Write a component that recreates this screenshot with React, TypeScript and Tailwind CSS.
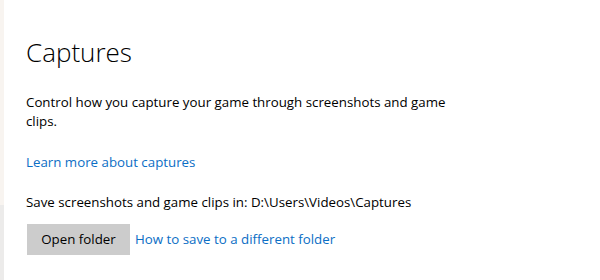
import React from 'react';

const font = { fontFamily: '"Open Sans", "Noto Sans", sans-serif' };

export default function App() {
  return (
    <div className="flex h-[280px] w-[600px] overflow-hidden bg-white" style={font}>
      {/* faint edge of the nav pane */}
      <div className="flex w-[4px] flex-col">
        <div className="h-[205px] bg-[#f8f4f0]" />
        <div className="flex-1 bg-[#ecebea]" />
      </div>
      <div className="flex flex-1 flex-col pl-[22px] pt-[34px] text-[#000]">
        <h1 className="text-[26px] font-light leading-[36px]">Captures</h1>
        <p className="mt-[23px] w-[432px] text-[13.3px] leading-[19px]">
          Control how you capture your game through screenshots and game clips.
        </p>
        <a className="mt-[22px] text-[13.3px] leading-[19px] text-[#0b6ec5]">Learn more about captures</a>
        <p className="mt-[21px] text-[13.3px] leading-[19px]">
          Save screenshots and game clips in: D:\Users\Videos\Captures
        </p>
        <div className="mt-[12px] flex items-center gap-[5px]">
          <button className="ml-[1px] h-[31px] w-[103px] bg-[#cccccc] text-[13.3px]">Open folder</button>
          <a className="text-[13.3px] text-[#0b6ec5]">How to save to a different folder</a>
        </div>
      </div>
    </div>
  );
}
